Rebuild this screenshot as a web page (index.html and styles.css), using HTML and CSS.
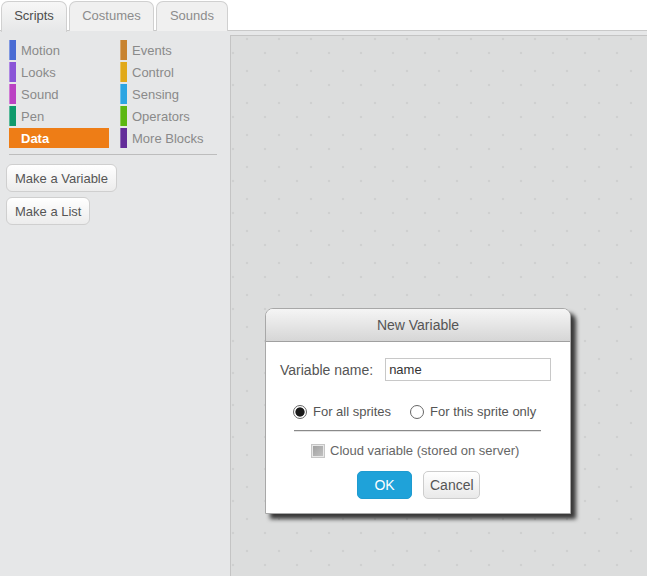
FILE: index.html
```html
<!DOCTYPE html>
<html lang="en">
<head>
  <meta charset="UTF-8" />
  <title>Scripts</title>
  <link rel="stylesheet" href="styles.css">
</head>
<body>
  <div class="tabs">
    <div class="tab active">Scripts</div>
    <div class="tab costumes">Costumes</div>
    <div class="tab sounds">Sounds</div>
  </div>

  <div class="workspace">
    <div class="palette">
      <div class="categories">
        <div class="cat"><span class="bar" style="background:#4a6cd4"></span>Motion</div>
        <div class="cat"><span class="bar" style="background:#c88330"></span>Events</div>
        <div class="cat"><span class="bar" style="background:#8a55d7"></span>Looks</div>
        <div class="cat"><span class="bar" style="background:#e1a91a"></span>Control</div>
        <div class="cat"><span class="bar" style="background:#bb42c3"></span>Sound</div>
        <div class="cat"><span class="bar" style="background:#2ca5e2"></span>Sensing</div>
        <div class="cat"><span class="bar" style="background:#0e9a6c"></span>Pen</div>
        <div class="cat"><span class="bar" style="background:#5cb712"></span>Operators</div>
        <div class="cat selected">Data</div>
        <div class="cat"><span class="bar" style="background:#632d99"></span>More Blocks</div>
      </div>
      <div class="divider"></div>
      <div class="palette-buttons">
        <button class="btn">Make a Variable</button>
        <button class="btn">Make a List</button>
      </div>
    </div>
    <div class="scripts-pane"></div>
  </div>

  <div class="dialog">
    <div class="dialog-title">New Variable</div>
    <div class="dialog-body">
      <div class="name-row">
        <label for="varName">Variable name:</label>
        <input type="text" id="varName" value="name" />
      </div>
      <div class="scope-row">
        <span class="radio checked"></span><span class="opt">For all sprites</span>
        <span class="radio"></span><span>For this sprite only</span>
      </div>
      <div class="rule"></div>
      <div class="cloud-row">
        <span class="checkbox"></span>Cloud variable (stored on server)
      </div>
      <div class="actions">
        <button class="ok">OK</button>
        <button class="cancel">Cancel</button>
      </div>
    </div>
  </div>
</body>
</html>
```

FILE: styles.css
```css
* {
  box-sizing: border-box;
}
html, body {
  height: 100%;
}
body {
  margin: 0;
  font-family: 'Liberation Sans', Arial, sans-serif;
  font-size: 13px;
  background: #fff;
  display: flex;
  flex-direction: column;
  overflow: hidden;
}

/* tab strip */
.tabs {
  display: flex;
  gap: 2px;
  height: 31px;
  padding: 1px 0 0 1px;
  border-bottom: 1px solid #c9c9c9;
}
.tab {
  height: 30px;
  padding-top: 6px;
  text-align: center;
  color: #8c8c8c;
  background: #f0f0f0;
  border: 1px solid #d0d0d0;
  border-bottom: none;
  border-radius: 7px 7px 0 0;
}
.tab.active {
  width: 66px;
  color: #4d4d4d;
  background: linear-gradient(#f7f7f7, #e6e7e8);
  height: 31px;
  margin-bottom: -1px;
  position: relative;
}
.tab.costumes {
  width: 85px;
}
.tab.sounds {
  width: 72px;
}

.workspace {
  flex: 1;
  display: flex;
  background: #e6e7e8;
}

/* block palette */
.palette {
  width: 230px;
  padding: 9px 0 0 9px;
}
.categories {
  display: grid;
  grid-template-columns: 111px 100px;
  row-gap: 2px;
}
.cat {
  height: 20px;
  display: flex;
  align-items: center;
  color: #8a8a8a;
}
.bar {
  width: 7px;
  height: 20px;
  margin-right: 5px;
  border-left: 1px solid rgba(255, 255, 255, 0.3);
}
.cat.selected {
  width: 100px;
  padding-left: 12px;
  background: #ee7d16;
  color: #fff;
  font-weight: bold;
}
.divider {
  width: 208px;
  height: 1px;
  margin-top: 6px;
  background: #bdbdbd;
}
.palette-buttons {
  display: flex;
  flex-direction: column;
  align-items: flex-start;
  gap: 5px;
  margin: 9px 0 0 -3px;
}
.btn {
  height: 28px;
  padding: 0 8px;
  font-family: inherit;
  font-size: 13px;
  color: #555;
  background: linear-gradient(#fff, #ececec);
  border: 1px solid #cfcfcf;
  border-radius: 6px;
}

/* script canvas */
.scripts-pane {
  flex: 1;
  margin-top: 4px;
  border-top: 1px solid #c4c4c4;
  border-left: 1px solid #c4c4c4;
  background-color: #dcdddd;
  background-image:
    radial-gradient(circle, #cfd0d0 1.3px, transparent 1.6px),
    radial-gradient(circle, #cfd0d0 1.3px, transparent 1.6px);
  background-size: 32px 32px;
  background-position: 0px -13px, -14px 1px;
}

/* new variable dialog */
.dialog {
  position: absolute;
  left: 265px;
  top: 308px;
  width: 306px;
  height: 206px;
  background: #fff;
  border: 1px solid #a8a8a8;
  border-radius: 8px 8px 0 0;
  box-shadow: 5px 5px 4px rgba(0, 0, 0, 0.75);
}
.dialog-title {
  height: 33px;
  padding-top: 8px;
  text-align: center;
  font-size: 14px;
  color: #555;
  background: linear-gradient(#f5f5f5, #d6d6d6);
  border-bottom: 1px solid #a0a0a0;
  border-radius: 7px 7px 0 0;
}
.dialog-body {
  display: flex;
  flex-direction: column;
  align-items: flex-start;
  padding-top: 16px;
}
.name-row {
  display: flex;
  align-items: center;
  padding-left: 14px;
}
.name-row label {
  font-size: 14px;
  color: #555;
  margin-right: 12px;
}
.name-row input {
  width: 166px;
  height: 23px;
  padding: 0 3px;
  font-family: inherit;
  font-size: 13px;
  color: #333;
  border: 1px solid #c8c8c8;
  outline: none;
}
.scope-row {
  display: flex;
  align-items: center;
  margin: 23px 0 0 27px;
  color: #555;
}
.radio {
  width: 14px;
  height: 14px;
  margin-right: 6px;
  border: 1px solid #666;
  border-radius: 50%;
  background: #fff;
}
.radio.checked {
  background: radial-gradient(circle, #1a1a1a 4.2px, #fff 5px);
}
.opt {
  margin-right: 19px;
}
.rule {
  width: 247px;
  height: 2px;
  margin: 11px 0 0 28px;
  border-top: 1px solid #8a8a8a;
  border-bottom: 1px solid #e4e4e4;
}
.cloud-row {
  display: flex;
  align-items: center;
  margin: 11px 0 0 45px;
  color: #666;
}
.checkbox {
  width: 14px;
  height: 14px;
  margin-right: 5px;
  border: 1px solid #c6c6c6;
  background: linear-gradient(135deg, #9e9e9e, #c4c4c4);
  box-shadow: inset 0 0 0 1px #e8e8e8;
}
.actions {
  display: flex;
  gap: 11px;
  margin: 13px 0 0 91px;
}
.actions button {
  height: 28px;
  font-family: inherit;
  font-size: 14px;
  border-radius: 5px;
}
.ok {
  width: 55px;
  color: #fff;
  background: #1fa2d9;
  border: 1px solid #1e9bd0;
}
.cancel {
  width: 57px;
  color: #555;
  background: linear-gradient(#fff, #e9e9e9);
  border: 1px solid #cdcdcd;
}
```
